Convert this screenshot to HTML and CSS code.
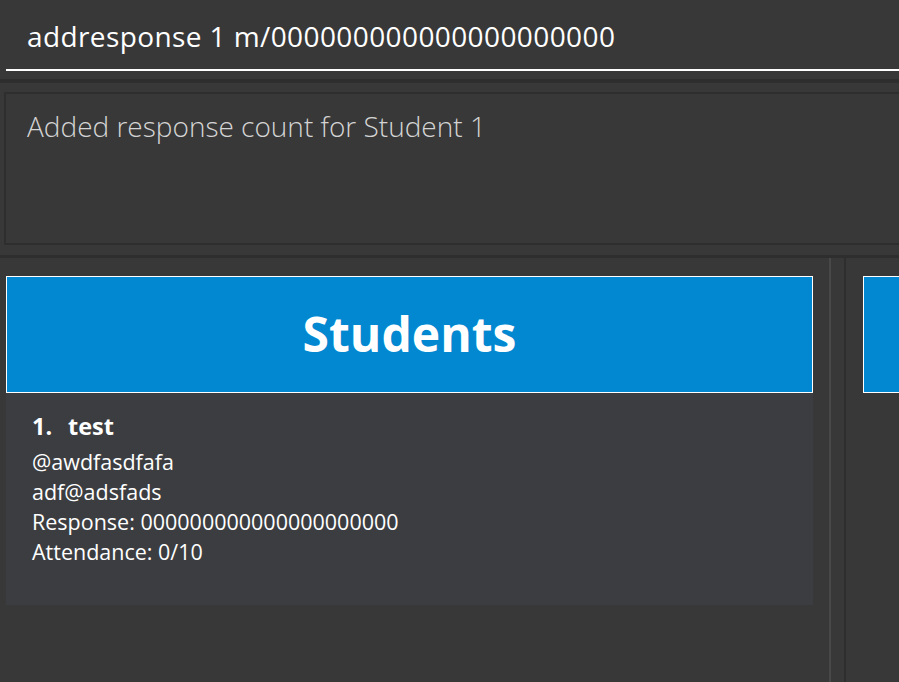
FILE: index.html
```html
<!DOCTYPE html>
<html>
<head>
<meta charset="utf-8">
<link rel="stylesheet" href="styles.css">
</head>
<body>
<div class="app">
  <div class="command">
    <div class="command-field">addresponse 1 m/000000000000000000000</div>
  </div>
  <div class="band"></div>
  <div class="result-wrap">
    <div class="result">Added response count for Student 1</div>
  </div>
  <div class="band band-lower"></div>
  <div class="main">
    <div class="panel panel-left">
      <div class="panel-title">Students</div>
      <div class="card">
        <div class="card-name"><span class="idx">1.</span>test</div>
        <div class="card-line">@awdfasdfafa</div>
        <div class="card-line">adf@adsfads</div>
        <div class="card-line">Response: 000000000000000000000</div>
        <div class="card-line">Attendance: 0/10</div>
      </div>
    </div>
    <div class="splitter"></div>
    <div class="panel panel-right">
      <div class="panel-title panel-title-right"></div>
    </div>
  </div>
</div>
</body>
</html>
```
FILE: styles.css
```css
html, body {
  margin: 0;
  padding: 0;
  background: #383838;
  height: 100%;
  overflow: hidden;
}
.app {
  font-family: "Open Sans", "Noto Sans", sans-serif;
  width: 899px;
  height: 682px;
  display: flex;
  flex-direction: column;
}
.command {
  height: 79px;
  padding-left: 6px;
  box-sizing: border-box;
}
.command-field {
  height: 71px;
  box-sizing: border-box;
  border-bottom: 2px solid #ffffff;
  color: #ffffff;
  font-size: 28px;
  line-height: 38px;
  letter-spacing: 0.4px;
  padding: 17px 0 0 21px;
  white-space: nowrap;
  overflow: hidden;
}
.band {
  height: 4px;
  background: #2e2e2e;
}
.result-wrap {
  padding: 9px 0 0 4px;
  height: 164px;
  box-sizing: border-box;
}
.result {
  height: 153px;
  box-sizing: border-box;
  border: 2px solid #2e2e2e;
  border-right: none;
  color: #d4d4d4;
  font-size: 28px;
  line-height: 38px;
  font-weight: 300;
  padding: 13px 0 0 21px;
  white-space: nowrap;
}
.band-lower {
  height: 3px;
  margin-top: 8px;
}
.main {
  flex: 1;
  display: flex;
}
.panel-left {
  width: 829px;
  padding: 18px 16px 0 6px;
  box-sizing: border-box;
}
.panel-title {
  height: 117px;
  box-sizing: border-box;
  background: #0288d1;
  border: 1px solid #ffffff;
  color: #ffffff;
  font-weight: 700;
  font-size: 48px;
  display: flex;
  align-items: center;
  justify-content: center;
  padding-bottom: 2px;
}
.card {
  background: #3c3d40;
  height: 212px;
  padding: 18px 0 0 26px;
  box-sizing: border-box;
  color: #ffffff;
}
.card-name {
  font-weight: 700;
  font-size: 23.5px;
  height: 36px;
  line-height: 30px;
}
.idx {
  display: inline-block;
  width: 36px;
}
.card-line {
  font-size: 21.5px;
  height: 30px;
  line-height: 30px;
}
.splitter {
  width: 17px;
  box-sizing: border-box;
  border-left: 2px solid #484848;
  border-right: 2px solid #2e2e2e;
}
.panel-right {
  flex: 1;
  padding: 18px 0 0 17px;
  box-sizing: border-box;
}
.panel-title-right {
  border-right: none;
}
```
